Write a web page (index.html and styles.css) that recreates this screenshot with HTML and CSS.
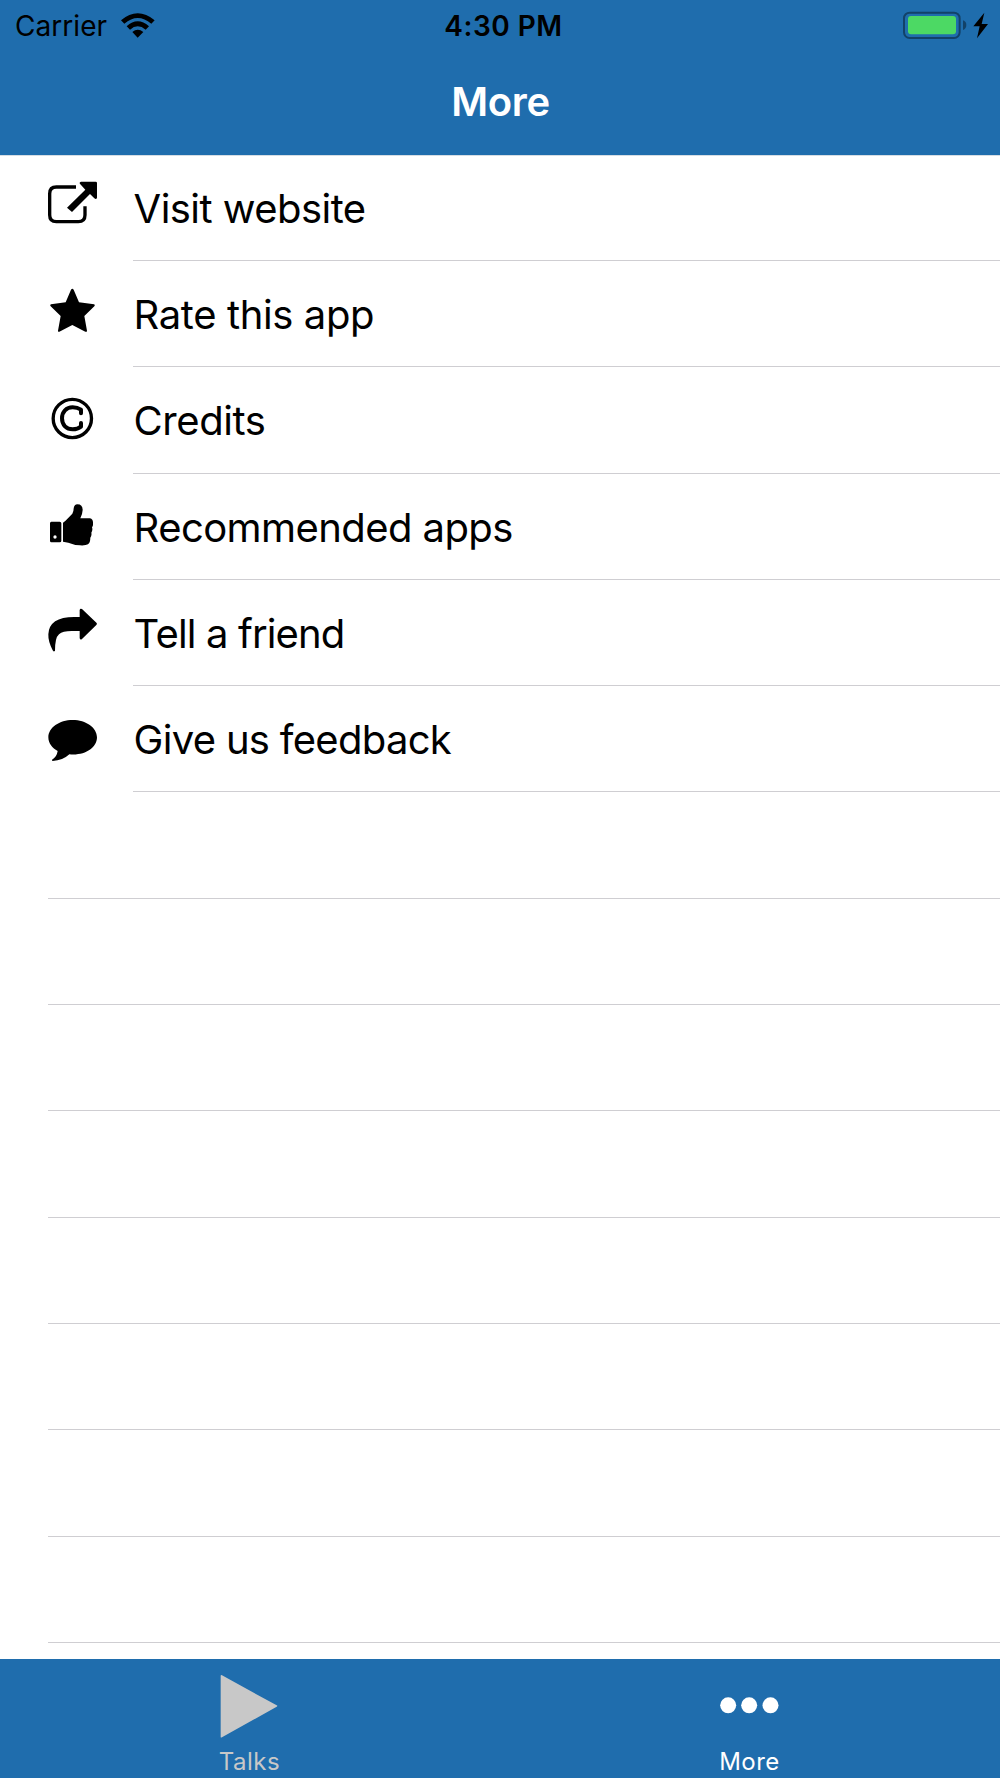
FILE: index.html
```html
<!DOCTYPE html>
<html lang="en">
<head>
<meta charset="utf-8">
<title>More</title>
<link rel="stylesheet" href="styles.css">
</head>
<body>
<div class="screen">
  <header class="header">
    <div class="status">
      <div class="status-left">
        <span class="carrier">Carrier</span>
        <svg class="wifi" viewBox="360 30 108 84"><path d="M363 58Q413 16 464 58L454 68Q413 34 373 68ZM380 76Q413 46 447 76L437 86Q413 66 390 86ZM397 93Q413 80 430 93L413 110Z"/></svg>
      </div>
      <span class="time">4:30 PM</span>
      <div class="status-right">
        <svg class="battery" viewBox="36 27 270 90"><rect x="42" y="35" width="167" height="76" rx="17" fill="none" stroke="#124268" stroke-width="6"/><rect x="54" y="45" width="144" height="55" rx="9" fill="#4cd964"/><path d="M219 58Q229 61 229 72T219 87Z" fill="#124268"/><path d="M283 35L250 76H269L261 112L294 69H275Z"/></svg>
      </div>
    </div>
    <h1 class="title">More</h1>
  </header>
  <main class="list">
    <div class="row"><svg class="icon" viewBox="45 -16 180 319"><path d="M138 80H79Q59 80 59 100V164Q59 184 79 184H145Q165 184 165 164V138" fill="none" stroke="#000" stroke-width="10"/><path d="M153 64H197Q201 64 201 68V112Q199 119 193 114L180 101L126 155L111 142L166 88L151 72Q146 66 153 64Z"/></svg><span class="label visit">Visit website</span></div>
    <div class="row"><svg class="icon" viewBox="45 303 180 319"><path d="M123 389Q127 384 131 389L147 427L192 433Q197 435 193 439L163 468L171 512Q171 517 166 515L127 495L88 515Q84 517 84 512L92 468L62 439Q58 435 63 433L107 427Z"/></svg><span class="label rate">Rate this app</span></div>
    <div class="row"><svg class="icon" viewBox="45 -9 180 319"><circle cx="127" cy="145.500" r="57.500" fill="none" stroke="#000" stroke-width="10"/><path d="M153 130V119Q142 112 128 112C109 112 96 125 96 145S109 178 128 178Q143 178 153 170V159" fill="none" stroke="#000" stroke-width="12" stroke-linecap="round" stroke-linejoin="round"/></svg><span class="label credits">Credits</span></div>
    <div class="row"><svg class="icon" viewBox="45 311 180 319"><path fill-rule="evenodd" d="M64 454H89Q94 454 94 459V511Q94 516 89 516H64Q60 516 60 511V459Q60 454 64 454ZM75 495A5 5 0 1 0 75 505A5 5 0 1 0 75 495ZM99 457Q104 455 111 447L127 430Q131 425 131 414Q133 402 142 402Q158 402 158 419Q158 428 151 444H180Q190 446 189 460Q190 466 186 471Q189 479 184 487Q186 495 181 502Q181 517 174 522Q167 526 150 525Q135 525 115 517L99 514Z"/></svg><span class="label recommended">Recommended apps</span></div>
    <div class="row"><svg class="icon" viewBox="45 0 180 319"><path d="M149 90Q150 84 156 87L200 129Q202 132 199 135L156 177Q151 181 149 175V153H125Q98 153 87 163Q75 173 75 212Q71 217 68 211Q54 184 55 163Q57 111 133 111H149Z"/></svg><span class="label friend">Tell a friend</span></div>
    <div class="row"><svg class="icon" viewBox="45 318 180 319"><path d="M128 420C168 420 201 443 201 472C201 504 164 528 118 523Q98 542 68 543Q63 541 69 537Q80 530 83 513C67 505 55 490 55 472C55 443 88 420 128 420Z"/></svg><span class="label feedback">Give us feedback</span></div>
    <div class="row empty"></div>
    <div class="row empty"></div>
    <div class="row empty"></div>
    <div class="row empty"></div>
    <div class="row empty"></div>
    <div class="row empty"></div>
    <div class="row empty"></div>
    <div class="row empty"></div>
  </main>
  <nav class="tabs">
    <div class="tab"><svg class="tab-icon" viewBox="58 57 186 270"><path d="M63 108Q63 104 67 106L231 196Q235 198 231 200L67 292Q63 294 63 290Z" fill="#c8c8c8"/></svg><span class="tab-label talks">Talks</span></div>
    <div class="tab active"><svg class="tab-icon" viewBox="56.500 57 186 270"><g fill="#fff"><circle cx="84" cy="196" r="24"/><circle cx="147" cy="196" r="24"/><circle cx="211" cy="196" r="24"/></g></svg><span class="tab-label">More</span></div>
  </nav>
</div>
</body>
</html>
```
FILE: styles.css
```css
* { box-sizing: border-box; }
body { margin: 0; background: #fff; font-family: Inter, "Liberation Sans", sans-serif; color: #000; }
.screen { display: flex; flex-direction: column; width: 1000px; height: 1778px; overflow: hidden; }
.header { flex: none; height: 154.7px; background: #1f6dad; box-shadow: 0 1px 0 #d5dde4; }
.status { display: grid; grid-template-columns: 1fr auto 1fr; align-items: center; height: 50px; padding: 0 8px 0 15px; }
.status-left { display: flex; align-items: center; gap: 13px; }
.carrier { padding-top: 1px; font-size: 28px; line-height: 50px; letter-spacing: 0.05px; }
.wifi { width: 36px; height: 28px; margin-top: -2px; }
.time { padding-top: 1px; font-size: 28px; line-height: 50px; font-weight: 600; letter-spacing: 0.5px; }
.status-right { display: flex; justify-content: flex-end; }
.battery { width: 90px; height: 30px; margin-top: -1px; }
.title { margin: 0; padding-left: 1px; height: 104px; line-height: 104px; text-align: center; color: #fff; font-size: 40px; font-weight: 600; letter-spacing: -0.3px; }
.list { height: 1504.3px; overflow: hidden; }
.row { display: flex; align-items: center; height: 106.3px; padding-left: 45px; }
.row::after { content: ""; align-self: flex-end; flex: 1; height: 1px; margin-left: 28px; background: #cfced2; }
.icon { flex: none; width: 60px; height: 106.3px; }
.label { flex: none; width: 867px; margin-left: 28px; margin-right: -895px; padding: 2px 0 0 0.6px; font-size: 40px; line-height: 106px; white-space: nowrap; }
.visit { letter-spacing: -0.54px; }
.rate { letter-spacing: -0.38px; }
.credits { letter-spacing: -0.45px; }
.recommended { letter-spacing: -0.58px; }
.friend { letter-spacing: -0.85px; }
.feedback { letter-spacing: -0.7px; }
.row.empty { padding-left: 48px; }
.row.empty::after { margin-left: 0; }
.tabs { flex: none; display: grid; grid-template-columns: 1fr 1fr; height: 119px; background: #1f6dad; }
.tab { display: flex; flex-direction: column; align-items: center; color: #c8c8c8; }
.tab.active { color: #fff; }
.tab-icon { width: 62px; height: 90px; }
.tab-label { margin: -3px 1px 0 0; font-size: 24px; line-height: 32px; letter-spacing: 0.5px; }
```
